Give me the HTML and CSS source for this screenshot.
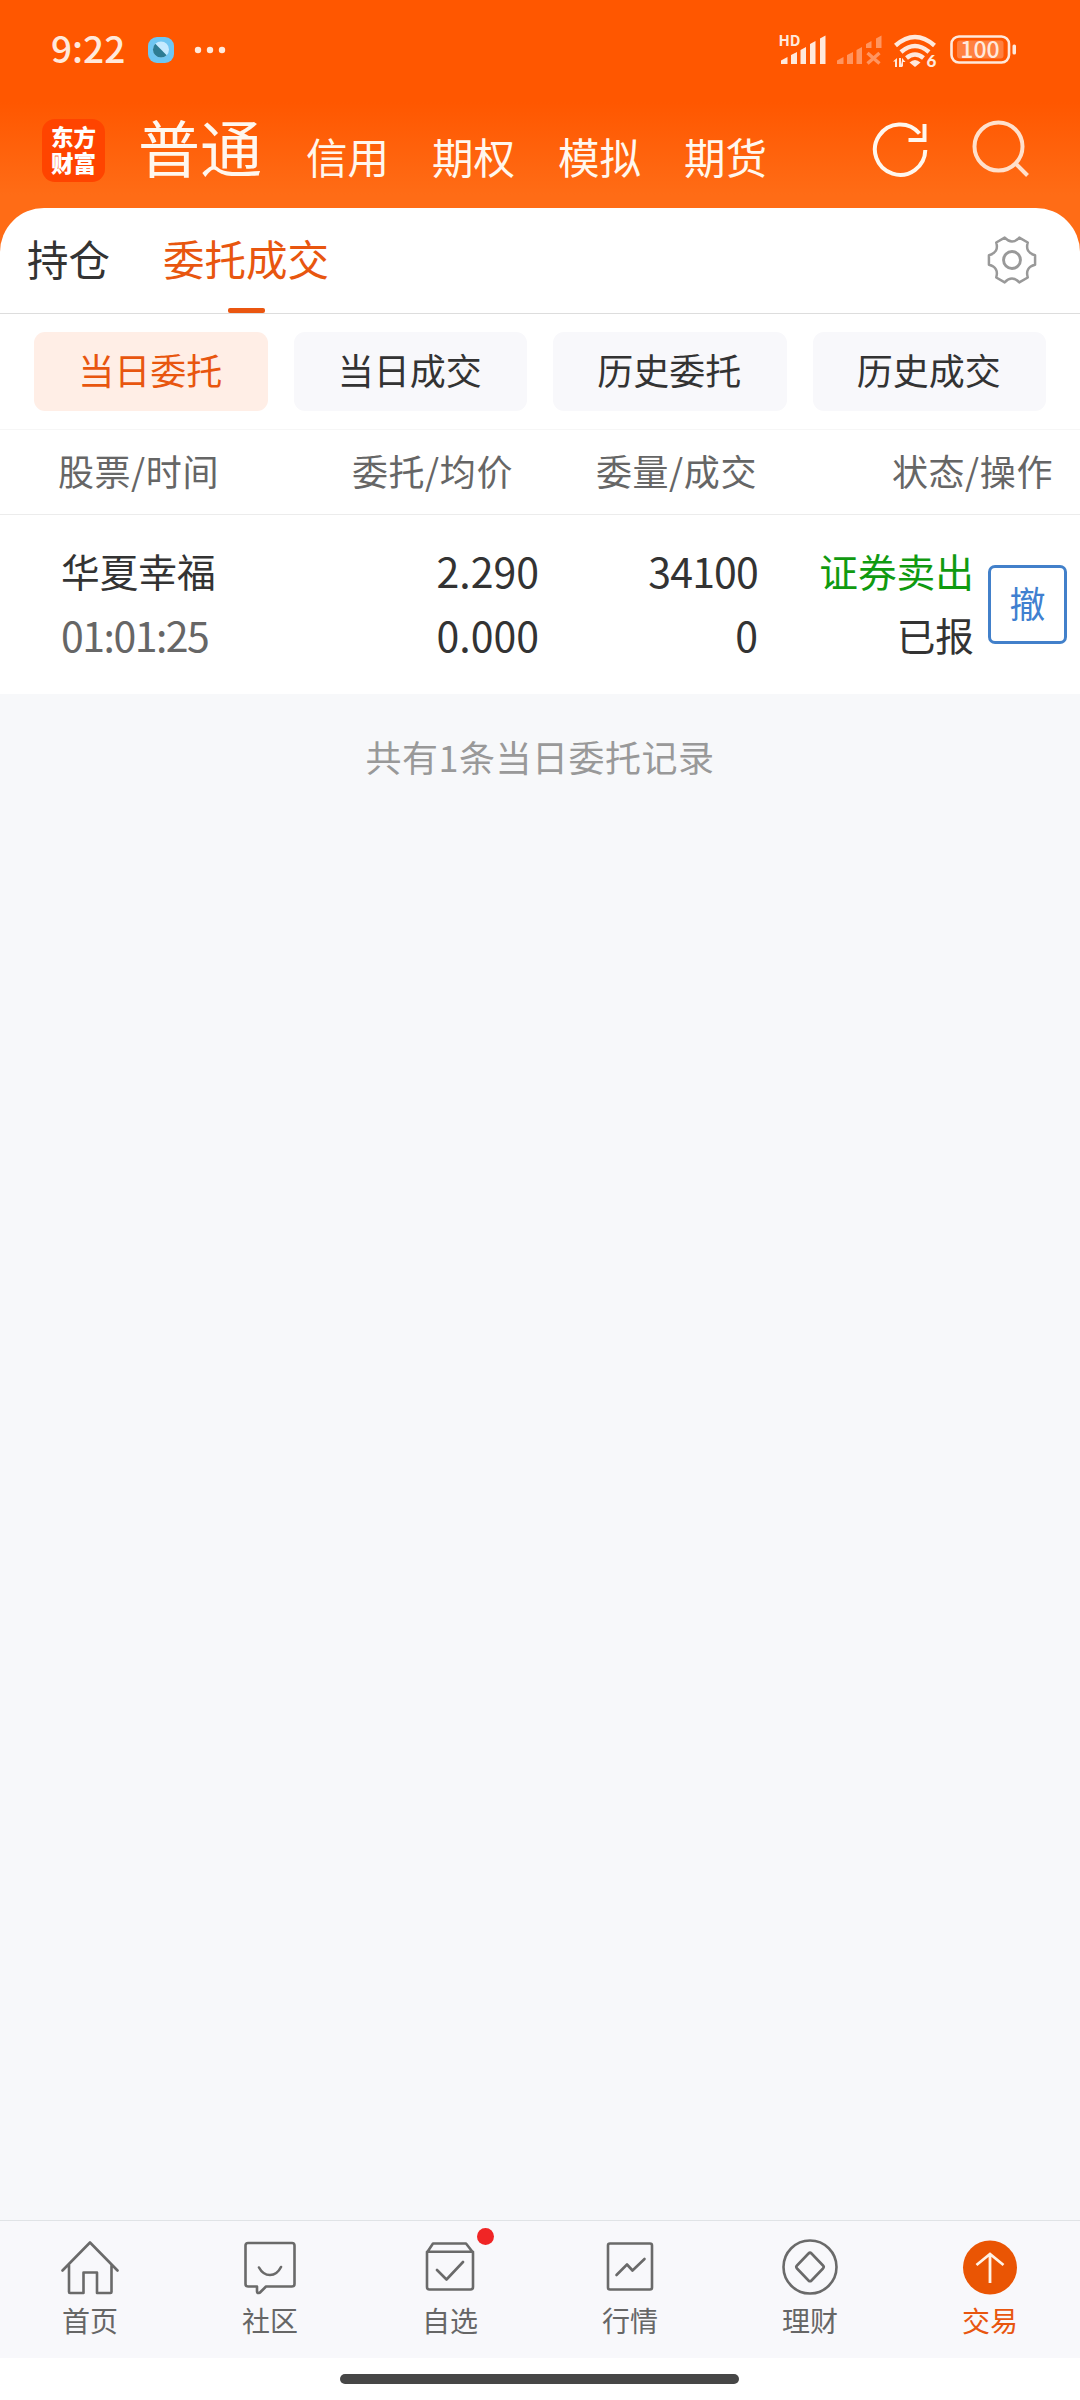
FILE: index.html
```html
<!DOCTYPE html>
<html lang="zh-CN">
<head>
<meta charset="utf-8">
<title>委托成交</title>
<link rel="stylesheet" href="styles.css">
</head>
<body>
<header class="top">
  <div class="status">
    <span class="clock">9:22</span>
    <svg class="app-badge" width="26" height="26" viewBox="0 0 26 26"><rect width="26" height="26" rx="9" fill="#6ec6f2"/><circle cx="13" cy="12.500" r="8" fill="#c5eaff"/><path d="M7.300 6.800A8 8 0 0 0 18.700 18.200Z" fill="#2c7c94"/></svg>
    <svg class="dots" width="32" height="8" viewBox="0 0 32 8" fill="#ffe9dc"><circle cx="4" cy="4" r="3.200"/><circle cx="16" cy="4" r="3.200"/><circle cx="28" cy="4" r="3.200"/></svg>
    <svg class="signals" width="250" height="40" viewBox="770 30 250 40">
      <g fill="#ffe9dc">
        <text class="hd" x="778.500" y="46">HD</text>
        <path d="M781 64v-3.500l6.500-3.500v7zM791 64V55l6-3v12zM800.500 64V50l5.500-3v17zM810 64V44l5.500-3v23zM820 64V38.500l5.500-3V64z"/>
        <path d="M909.500 62.500q5.500-5 11 0l-5.500 4.500z"/>
        <path d="M893 61.500l4-3.500v9h-2v-5.500zM899 58h2v9h-2zM902.500 58v9h-2zM902 58l3.500 4h-2.500v4h-1z"/>
        <text class="six" x="926.500" y="67">6</text>
        <rect x="1012.500" y="44.500" width="3.500" height="10" rx="1.500"/>
      </g>
      <g fill="none" stroke="#ffe9dc" stroke-width="4.500">
        <path d="M895.500 45.500q19.500-17 39 0M901 52q14-12 28 0M906.500 58q8.500-7 17 0"/>
        <rect x="951.500" y="36.500" width="57.500" height="26" rx="7.500" stroke-width="2.600"/>
      </g>
      <g fill="#ff9560"><path d="M837 64v-3.500l6.500-3.500v7zM847 64V55l6-3v12zM856.500 64V50l5.500-3v17zM866 48v-4l5.500-3v7zM876 48V38.500l5.500-3V48z"/><rect x="957" y="40.500" width="46.500" height="18" rx="3" fill="#ff8040"/></g>
      <path d="M867.500 53l12 10.500m0-10.500l-12 10.500" stroke="#ff9560" stroke-width="3.400" fill="none"/>
      <text class="level" x="980" y="58" text-anchor="middle">100</text>
    </svg>
  </div>
  <nav class="accounts">
    <div class="logo"><span>东方</span><span>财富</span></div>
    <a class="account current">普通</a>
    <a class="account">信用</a>
    <a class="account">期权</a>
    <a class="account">模拟</a>
    <a class="account">期货</a>
    <svg class="refresh" width="60" height="60" viewBox="870 120 60 60" fill="none" stroke="#fff7ee" stroke-width="4"><path d="M925.300 150A25.200 25.200 0 1 1 919.500 133.500M924.500 124v16H908.500"/></svg>
    <svg class="search" width="60" height="60" viewBox="970 118 60 60" fill="none" stroke="#ffe0cc" stroke-width="4"><circle cx="998.500" cy="146.500" r="24"/><path d="M1015 163l12.500 12.500"/></svg>
  </nav>
</header>
<main class="sheet">
  <nav class="tabs">
    <a class="tab">持仓</a>
    <a class="tab active">委托成交</a>
    <svg class="gear" width="50" height="50" viewBox="-26 -26 52 52" fill="none" stroke="#999" stroke-width="2.600" stroke-linejoin="round"><path d="M24-5V5Q13.300 7.700 16.400 18.200L7.600 23.300Q0 15.400-7.600 23.300L-16.400 18.200Q-13.300 7.700-24 5V-5Q-13.300-7.700-16.400-18.200L-7.600-23.300Q0-15.400 7.600-23.300L16.400-18.200Q13.300-7.700 24-5Z"/><circle r="8.800" stroke-width="3"/></svg>
  </nav>
  <div class="filters">
    <a class="filter chosen">当日委托</a>
    <a class="filter">当日成交</a>
    <a class="filter">历史委托</a>
    <a class="filter">历史成交</a>
  </div>
  <div class="grid head">
    <span>股票/时间</span><span>委托/均价</span><span>委量/成交</span><span>状态/操作</span>
  </div>
  <div class="grid order">
    <div class="cell name"><span>华夏幸福</span><span class="num time">01:01:25</span></div>
    <div class="cell"><span class="num">2.290</span><span class="num">0.000</span></div>
    <div class="cell"><span class="num qty">34100</span><span class="num">0</span></div>
    <div class="cell"><span class="sell">证券卖出</span><span>已报</span></div>
    <button class="cancel">撤</button>
  </div>
</main>
<p class="summary">共有1条当日委托记录</p>
<nav class="bottom">
  <a class="item"><svg width="60" height="60" viewBox="0 0 60 60"><path d="M2.500 32.500L30 4.500L57.500 32.500M9 27V54q0 1 1 1H23.500V34.500H37V55H50.500q1 0 1-1V27"/></svg>首页</a>
  <a class="item"><svg width="60" height="60" viewBox="0 0 60 60"><path d="M8 5H52q2.500 0 2.500 2.500V46q0 2.500-2.500 2.500H26l-6 6q-3 1.500-3-1V48.500H8q-2.500 0-2.500-2.500V7.500Q5.500 5 8 5ZM19 29.500q4 7.500 11 7.500t11-8"/></svg>社区</a>
  <a class="item"><svg width="60" height="60" viewBox="0 0 60 60"><path d="M7 14.500L13 5.500H46L53 14.500V49q0 2.500-2.500 2.500H9.500Q7 51.500 7 49ZM7 13.800H53M17 32L26.500 41.500L43 24"/></svg><i class="dot"></i>自选</a>
  <a class="item"><svg width="60" height="60" viewBox="0 0 60 60"><rect x="8" y="5.500" width="44" height="46" rx="2"/><path d="M16.500 37L27 26.500L32.500 32.500L44.500 21"/></svg>行情</a>
  <a class="item"><svg width="60" height="60" viewBox="0 0 60 60"><circle cx="30" cy="29" r="26.500"/><path d="M28.500 15.500q1.500-1.500 3 0L43 27.500q1.500 1.500 0 3L31.500 42.500q-1.500 1.500-3 0L17 30.500q-1.500-1.500 0-3Z"/></svg>理财</a>
  <a class="item on"><svg width="60" height="60" viewBox="0 0 60 60"><circle class="disc" cx="30" cy="29.500" r="27"/><path d="M30 45V16.500M16.500 27L30 16L43.500 27"/></svg>交易</a>
</nav>
<footer class="gesture"><div class="pill"></div></footer>
</body>
</html>
```
FILE: styles.css
```css
* { box-sizing: border-box; }
body {
  margin: 0;
  width: 1080px;
  height: 2400px;
  display: flex;
  flex-direction: column;
  background: #f7f8fa;
  color: #333;
  font-family: "Noto Sans CJK SC", sans-serif;
  overflow: hidden;
}
.top {
  height: 260px;
  flex: none;
  background: linear-gradient(#ff5700 0, #ff5700 102px, #ff6c16 195px, #ff6c16 100%);
}
.status { height: 100px; display: flex; align-items: center; padding-left: 51px; }
.clock {
  width: 97px;
  margin-top: -6px;
  font: 500 37px/40px "Noto Sans CJK SC", sans-serif;
  color: #ffe9dc;
}
.dots { margin-left: 20px; }
.signals { margin-left: 544px; }
.hd { font: bold 15px "Noto Sans CJK SC", sans-serif; }
.six { font: 900 17px Lato, sans-serif; }
.level { font: 500 23px "Noto Sans CJK SC", sans-serif; fill: #ffe9dc; }

.accounts { height: 100px; display: flex; align-items: center; padding-left: 42px; }
.logo {
  width: 63px;
  height: 63px;
  margin-right: 33px;
  padding-bottom: 3px;
  border-radius: 13px;
  background: #ff4400;
  color: #fff;
  display: flex;
  flex-direction: column;
  align-items: center;
  justify-content: center;
  font: 900 22.500px/26px "Noto Sans CJK SC", sans-serif;
}
.account { width: 126px; font-size: 41.500px; line-height: 60px; color: #fff7ee; padding-top: 12px; }
.account.current { width: 168px; font-size: 62px; padding-top: 0; line-height: 88px; margin-top: -8px; }
.refresh { margin-left: 60px; }
.search { margin-left: 40px; margin-top: -4px; }

.sheet { margin-top: -52px; background: #fff; border-radius: 44px 44px 0 0; height: 486px; flex: none; }
.tabs {
  height: 106px;
  border-bottom: 1px solid #ddd;
  display: flex;
  align-items: center;
  padding: 0 43px 0 27px;
  font-size: 41.500px;
}
.tab { height: 105px; line-height: 100px; margin-right: 53px; display: flex; flex-direction: column; align-items: center; }
.tab.active { color: #e8560f; }
.tab.active::after { content: ""; width: 37px; height: 5px; border-radius: 2px; background: #ea5610; }
.gear { margin-left: auto; margin-top: -1px; }
.filters { height: 116px; display: flex; gap: 26px; padding: 18px 34px 17px; border-bottom: 1px solid #f6f6f6; }
.filter {
  flex: 1;
  height: 79px;
  border-radius: 11px;
  background: #f8f8fb;
  font-size: 36px;
  line-height: 75px;
  text-align: center;
  text-indent: -1px;
}
.chosen { background: #ffeee6; color: #e8560f; }
.grid { display: grid; }
.head {
  grid-template-columns: 219px 294px 244px 296px;
  height: 85px;
  line-height: 80px;
  border-bottom: 1px solid #ececec;
  font-size: 36px;
  letter-spacing: .6px;
  color: #666;
  text-align: right;
}
.order {
  grid-template-columns: 61px 153px 325px 219px 216px 94px;
  padding-top: 23px;
  font-size: 38.700px;
}
.cell { display: flex; flex-direction: column; text-align: right; line-height: 64px; white-space: nowrap; }
.name { grid-column: 2; text-align: left; }
.num { font-size: 41px; }
.qty { letter-spacing: -.8px; }
.time { color: #666; letter-spacing: -1.500px; }
.sell { color: #109a10; }
.cancel {
  width: 79px;
  height: 79px;
  margin: 27px 0 0 14px;
  padding: 0 0 4px;
  border: 3px solid #4280ca;
  border-radius: 7px;
  background: #fff;
  color: #4080d0;
  font: 36px/69px "Noto Sans CJK SC", sans-serif;
}
.summary { margin: 38px 0 0; text-align: center; font-size: 36px; line-height: 48px; color: #999; letter-spacing: .5px; }
.bottom {
  margin-top: auto;
  height: 138px;
  flex: none;
  display: flex;
  background: #f8f8fb;
  border-top: 1px solid #e0e3e6;
}
.item {
  position: relative;
  flex: 1;
  display: flex;
  flex-direction: column;
  align-items: center;
  padding-top: 17px;
  font-size: 28px;
  line-height: 44px;
  color: #666;
}
.item svg { flex: none; fill: none; stroke: #6a6a6a; stroke-width: 2.600; stroke-linejoin: round; stroke-linecap: round; }
.item.on { color: #e8560f; }
.item.on svg { stroke: #fff2e6; stroke-width: 2.800; stroke-linecap: butt; stroke-linejoin: miter; }
.item .disc { fill: #ea5504; stroke: none; }
.dot { position: absolute; left: 117px; top: 7px; width: 17px; height: 17px; border-radius: 50%; background: #f02525; }
.gesture { height: 42px; flex: none; background: #fff; display: flex; justify-content: center; padding: 16px 1px 0 0; }
.pill { width: 399px; height: 10px; border-radius: 5px; background: #464646; }
```
